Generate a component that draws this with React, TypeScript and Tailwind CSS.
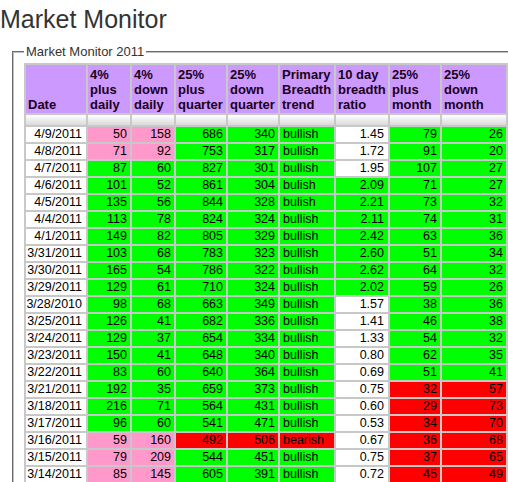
import React from "react";

type C = "w" | "p" | "g" | "r";
type Row = {
  d: string;
  p4: number; d4: number; c4: C;
  pq: number; dq: number; cq: C;
  t: string; ct: C;
  ratio: string; cr: C;
  pm: number; dm: number; cm: C;
};

const rows: Row[] = [
  { d: "4/9/2011", p4: 50, d4: 158, c4: "p", pq: 686, dq: 340, cq: "g", t: "bullish", ct: "g", ratio: "1.45", cr: "w", pm: 79, dm: 26, cm: "g" },
  { d: "4/8/2011", p4: 71, d4: 92, c4: "p", pq: 753, dq: 317, cq: "g", t: "bullish", ct: "g", ratio: "1.72", cr: "w", pm: 91, dm: 20, cm: "g" },
  { d: "4/7/2011", p4: 87, d4: 60, c4: "g", pq: 827, dq: 301, cq: "g", t: "bullish", ct: "g", ratio: "1.95", cr: "w", pm: 107, dm: 27, cm: "g" },
  { d: "4/6/2011", p4: 101, d4: 52, c4: "g", pq: 861, dq: 304, cq: "g", t: "bulish", ct: "g", ratio: "2.09", cr: "g", pm: 71, dm: 27, cm: "g" },
  { d: "4/5/2011", p4: 135, d4: 56, c4: "g", pq: 844, dq: 328, cq: "g", t: "bulish", ct: "g", ratio: "2.21", cr: "g", pm: 73, dm: 32, cm: "g" },
  { d: "4/4/2011", p4: 113, d4: 78, c4: "g", pq: 824, dq: 324, cq: "g", t: "bullish", ct: "g", ratio: "2.11", cr: "g", pm: 74, dm: 31, cm: "g" },
  { d: "4/1/2011", p4: 149, d4: 82, c4: "g", pq: 805, dq: 329, cq: "g", t: "bullish", ct: "g", ratio: "2.42", cr: "g", pm: 63, dm: 36, cm: "g" },
  { d: "3/31/2011", p4: 103, d4: 68, c4: "g", pq: 783, dq: 323, cq: "g", t: "bullish", ct: "g", ratio: "2.60", cr: "g", pm: 51, dm: 34, cm: "g" },
  { d: "3/30/2011", p4: 165, d4: 54, c4: "g", pq: 786, dq: 322, cq: "g", t: "bullish", ct: "g", ratio: "2.62", cr: "g", pm: 64, dm: 32, cm: "g" },
  { d: "3/29/2011", p4: 129, d4: 61, c4: "g", pq: 710, dq: 324, cq: "g", t: "bullish", ct: "g", ratio: "2.02", cr: "g", pm: 59, dm: 26, cm: "g" },
  { d: "3/28/2010", p4: 98, d4: 68, c4: "g", pq: 663, dq: 349, cq: "g", t: "bullish", ct: "g", ratio: "1.57", cr: "w", pm: 38, dm: 36, cm: "g" },
  { d: "3/25/2011", p4: 126, d4: 41, c4: "g", pq: 682, dq: 336, cq: "g", t: "bullish", ct: "g", ratio: "1.41", cr: "w", pm: 46, dm: 38, cm: "g" },
  { d: "3/24/2011", p4: 129, d4: 37, c4: "g", pq: 654, dq: 334, cq: "g", t: "bullish", ct: "g", ratio: "1.33", cr: "w", pm: 54, dm: 32, cm: "g" },
  { d: "3/23/2011", p4: 150, d4: 41, c4: "g", pq: 648, dq: 340, cq: "g", t: "bullish", ct: "g", ratio: "0.80", cr: "w", pm: 62, dm: 35, cm: "g" },
  { d: "3/22/2011", p4: 83, d4: 60, c4: "g", pq: 640, dq: 364, cq: "g", t: "bullish", ct: "g", ratio: "0.69", cr: "w", pm: 51, dm: 41, cm: "g" },
  { d: "3/21/2011", p4: 192, d4: 35, c4: "g", pq: 659, dq: 373, cq: "g", t: "bullish", ct: "g", ratio: "0.75", cr: "w", pm: 32, dm: 57, cm: "r" },
  { d: "3/18/2011", p4: 216, d4: 71, c4: "g", pq: 564, dq: 431, cq: "g", t: "bullish", ct: "g", ratio: "0.60", cr: "w", pm: 29, dm: 73, cm: "r" },
  { d: "3/17/2011", p4: 96, d4: 60, c4: "g", pq: 541, dq: 471, cq: "g", t: "bullish", ct: "g", ratio: "0.53", cr: "w", pm: 34, dm: 70, cm: "r" },
  { d: "3/16/2011", p4: 59, d4: 160, c4: "p", pq: 492, dq: 506, cq: "r", t: "bearish", ct: "r", ratio: "0.67", cr: "w", pm: 36, dm: 68, cm: "r" },
  { d: "3/15/2011", p4: 79, d4: 209, c4: "p", pq: 544, dq: 451, cq: "g", t: "bullish", ct: "g", ratio: "0.75", cr: "w", pm: 37, dm: 65, cm: "r" },
  { d: "3/14/2011", p4: 85, d4: 145, c4: "p", pq: 605, dq: 391, cq: "g", t: "bullish", ct: "g", ratio: "0.72", cr: "w", pm: 45, dm: 49, cm: "r" },
];

const bg: Record<C, string> = {
  w: "bg-white",
  p: "bg-[#ff99cc]",
  g: "bg-[#00ff00]",
  r: "bg-[#ff0000]",
};

const num = "h-[15px] p-0 pr-[3px] text-right leading-[15px] whitespace-nowrap";
const headers: string[][] = [
  ["Date"],
  ["4%", "plus", "daily"],
  ["4%", "down", "daily"],
  ["25%", "plus", "quarter"],
  ["25%", "down", "quarter"],
  ["Primary", "Breadth", "trend"],
  ["10 day", "breadth", "ratio"],
  ["25%", "plus", "month"],
  ["25%", "down", "month"],
];
const widths = [60, 42, 42, 50, 50, 54, 52, 50, 64];

export default function App() {
  return (
    <div className="w-[508px] h-[482px] overflow-hidden bg-white font-['Liberation_Sans',Arial,sans-serif]">
      <h1 className="mt-[7px] ml-0 text-[25px] leading-[25px] text-[#333] font-normal whitespace-nowrap">
        Market Monitor
      </h1>
      <fieldset className="mt-[12px] ml-[12px] w-[508px] border-2 [border-style:groove] border-[#c0c0c0] pl-[10px] pr-[10px] pt-[4px] pb-[10px]">
        <legend className="px-[2px] text-[13px] leading-[15px] text-[#333] whitespace-nowrap">
          Market Monitor 2011
        </legend>
        <table className="table-fixed w-[484px] border-separate border-spacing-[2px] bg-[#c8c8c8] text-[12.5px] text-black">
          <colgroup>
            {widths.map((w, i) => (
              <col key={i} style={{ width: w }} />
            ))}
          </colgroup>
          <thead>
            <tr>
              {headers.map((h, i) => (
                <th
                  key={i}
                  className="bg-[#cc99ff] p-0 pl-[2px] pt-[2px] pb-[1px] align-bottom text-left text-[13px] font-bold leading-[15px] text-[#1a001a] whitespace-nowrap"
                >
                  {h.map((l, j) => (
                    <div key={j}>{l}</div>
                  ))}
                </th>
              ))}
            </tr>
            <tr>
              {widths.map((_, i) => (
                <td key={i} className="h-[10px] p-0 bg-linear-to-b from-white to-[#dadada]" />
              ))}
            </tr>
          </thead>
          <tbody>
            {rows.map((r) => (
              <tr key={r.d}>
                <td className="h-[15px] p-0 pr-[4px] text-right leading-[15px] bg-white whitespace-nowrap">{r.d}</td>
                <td className={`${num} ${bg[r.c4]}`}>{r.p4}</td>
                <td className={`${num} ${bg[r.c4]}`}>{r.d4}</td>
                <td className={`${num} ${bg[r.cq]}`}>{r.pq}</td>
                <td className={`${num} ${bg[r.cq]}`}>{r.dq}</td>
                <td className={`h-[15px] p-0 pl-[3px] text-left leading-[15px] whitespace-nowrap ${bg[r.ct]}`}>{r.t}</td>
                <td className={`${num} pr-[4px] ${bg[r.cr]}`}>{r.ratio}</td>
                <td className={`${num} ${bg[r.cm]}`}>{r.pm}</td>
                <td className={`${num} ${bg[r.cm]}`}>{r.dm}</td>
              </tr>
            ))}
          </tbody>
        </table>
      </fieldset>
    </div>
  );
}
